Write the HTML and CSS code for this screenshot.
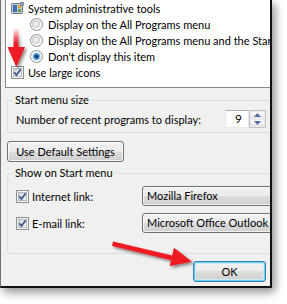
FILE: index.html
```html
<!DOCTYPE html>
<html>
<head>
<meta charset="utf-8">
<link rel="stylesheet" href="styles.css">
</head>
<body>
<div class="dialog">
  <div class="inner">
    <div class="list">
      <div class="row lvl0">
        <svg class="ico" width="13" height="12" viewBox="0 0 13 12">
          <rect x="0.5" y="1.5" width="11" height="10" rx="1" fill="#c9ced6" stroke="#6d7787"/>
          <rect x="2" y="3" width="4" height="7" fill="#3d6fb6"/>
          <rect x="7" y="3" width="3" height="3" fill="#e0a526"/>
          <rect x="7" y="7" width="3" height="3" fill="#5aa34a"/>
          <rect x="9" y="0" width="4" height="4" fill="#8b96a8"/>
        </svg>
        <span>System administrative tools</span>
      </div>
      <div class="row lvl1"><span class="radio"></span><span>Display on the All Programs menu</span></div>
      <div class="row lvl1"><span class="radio"></span><span>Display on the All Programs menu and the Start menu</span></div>
      <div class="row lvl1"><span class="radio on"></span><span>Don't display this item</span></div>
      <div class="row lvl0"><span class="check"><svg class="tick" viewBox="0 0 13 13"><path d="M3.2 6.3 L5.4 9 L9.8 3.2" fill="none" stroke="#3f5a94" stroke-width="1.8"/></svg></span><span>Use large icons</span></div>
    </div>

    <fieldset class="group g1">
      <legend>Start menu size</legend>
      <div class="sizerow">
        <span>Number of recent programs to display:</span>
        <div class="spin">
          <div class="spinval">9</div>
          <div class="spinbtns">
            <span class="sb"><svg width="7" height="4" viewBox="0 0 7 4"><path d="M0 4 L3.5 0 L7 4Z" fill="#4f6fa8"/></svg></span>
            <span class="sb"><svg width="7" height="4" viewBox="0 0 7 4"><path d="M0 0 L3.5 4 L7 0Z" fill="#4f6fa8"/></svg></span>
          </div>
        </div>
      </div>
    </fieldset>

    <div class="btnrow"><button class="btn">Use Default Settings</button></div>

    <fieldset class="group g2">
      <legend>Show on Start menu</legend>
      <div class="links">
        <div class="lnk"><span class="check"><svg class="tick" viewBox="0 0 13 13"><path d="M3.2 6.3 L5.4 9 L9.8 3.2" fill="none" stroke="#3f5a94" stroke-width="1.8"/></svg></span><span>Internet link:</span></div>
        <div class="combo">Mozilla Firefox</div>
        <div class="lnk"><span class="check"><svg class="tick" viewBox="0 0 13 13"><path d="M3.2 6.3 L5.4 9 L9.8 3.2" fill="none" stroke="#3f5a94" stroke-width="1.8"/></svg></span><span>E-mail link:</span></div>
        <div class="combo">Microsoft Office Outlook</div>
      </div>
    </fieldset>

    <div class="actions"><button class="btn ok">OK</button></div>
  </div>
</div>

<svg class="arrows" width="287" height="304" viewBox="0 0 287 304">
  <defs>
    <linearGradient id="fade" x1="0" y1="28" x2="0" y2="44" gradientUnits="userSpaceOnUse">
      <stop offset="0" stop-color="#ee1c24" stop-opacity="0"/>
      <stop offset="1" stop-color="#ee1c24" stop-opacity="1"/>
    </linearGradient>
    <filter id="sh" x="-50%" y="-50%" width="200%" height="200%">
      <feDropShadow dx="2" dy="2" stdDeviation="1.6" flood-color="#000" flood-opacity="0.45"/>
    </filter>
  </defs>
  <g filter="url(#sh)">
    <rect x="13.5" y="28" width="5" height="21" fill="url(#fade)"/>
    <path d="M7.5 47 L25 47 L16.3 67 Z" fill="#ee1c24"/>
  </g>
  <g filter="url(#sh)">
    <path d="M113 241.4 L172.3 255.4 L171.2 260.2 L112 246 Z" fill="#ee1c24"/>
    <path d="M174 247.8 L192 261.8 L169.6 266 Z" fill="#ee1c24"/>
  </g>
</svg>
</body>
</html>
```

FILE: styles.css
```css
html, body {
  margin: 0;
  padding: 0;
}
body {
  width: 287px;
  height: 304px;
  background: #fff;
  position: relative;
  overflow: hidden;
  font-family: "Lato", "Noto Sans", sans-serif;
  font-size: 11px;
  color: #000;
}
.dialog {
  width: 272px;
  height: 288px;
  box-sizing: border-box;
  border-left: 1px solid #707070;
  border-right: 2px solid #111;
  border-bottom: 2px solid #111;
  background: #f0f0f0;
  box-shadow: 3px 4px 9px rgba(0, 0, 0, 0.45);
  overflow: hidden;
}
.inner {
  width: 290px;
}
.list {
  margin-left: 4px;
  height: 88px;
  box-sizing: border-box;
  background: #fff;
  border-left: 1px solid #828790;
  border-bottom: 1px solid #828790;
}
.row {
  height: 16px;
  display: flex;
  align-items: center;
  white-space: nowrap;
}
.lvl0 {
  padding-left: 5px;
  gap: 4px;
}
.lvl1 {
  padding-left: 24px;
  gap: 5px;
}
.ico {
  flex: none;
}
.radio {
  flex: none;
  width: 13px;
  height: 13px;
  box-sizing: border-box;
  border-radius: 50%;
  border: 1px solid #8e8f8f;
  background: radial-gradient(circle at 45% 45%, #f6f6f6 0, #e2e2e2 2.5px, #cdcdcd 4px, #fff 4.6px);
}
.radio.on {
  background: radial-gradient(circle at 50% 50%, #14305c 0, #25579a 1.8px, #6fb3e6 3px, #bfe0f6 4px, #fff 4.6px);
}
.check {
  flex: none;
  width: 13px;
  height: 13px;
  box-sizing: border-box;
  border: 1px solid #8e8f8f;
  background: #f7f7f7;
  position: relative;
}
.check::before {
  content: "";
  position: absolute;
  left: 1px;
  top: 1px;
  right: 1px;
  bottom: 1px;
  border: 1px solid #b5b9c0;
  background: linear-gradient(135deg, #d2d5da, #f5f5f5);
}
.tick {
  position: absolute;
  left: -1px;
  top: -1px;
  width: 13px;
  height: 13px;
}
.group {
  margin: 0 0 0 6px;
  border: 1px solid #d5dfe5;
  border-radius: 3px;
  padding: 0 0 0 5px;
  min-width: 0;
}
.group legend {
  padding: 0 2px;
  line-height: 16px;
  height: 16px;
}
.g1 {
  margin-top: 4px;
  padding-top: 2px;
  padding-bottom: 4px;
}
.sizerow {
  display: grid;
  grid-template-columns: 209px auto;
  align-items: center;
  padding-left: 3px;
  white-space: nowrap;
}
.spin {
  display: flex;
  height: 18px;
  justify-self: start;
}
.spinval {
  width: 24px;
  box-sizing: border-box;
  height: 18px;
  background: #fff;
  border: 1px solid #e3e9ef;
  border-top-color: #abadb3;
  text-align: right;
  padding-right: 6px;
  line-height: 16px;
  font-size: 12px;
}
.spinbtns {
  display: flex;
  flex-direction: column;
  width: 17px;
  border: 1px solid #c3c3c3;
  box-sizing: border-box;
}
.sb {
  flex: 1;
  display: flex;
  align-items: center;
  justify-content: center;
  background: linear-gradient(#fbfbfb, #e6e6e6);
  border: 1px solid #e9e9e9;
}
.btnrow {
  margin: 8px 0 0 6px;
}
.btn {
  font: inherit;
  color: #000;
  height: 21px;
  box-sizing: border-box;
  border: 1px solid #707070;
  border-radius: 3px;
  background: linear-gradient(#f2f2f2 0, #ebebeb 50%, #dddddd 50%, #cfcfcf 100%);
  box-shadow: inset 0 0 0 1px rgba(255, 255, 255, 0.75);
  padding: 0;
  display: block;
}
.btnrow .btn {
  width: 117px;
}
.g2 {
  margin-top: 3px;
  padding-top: 5px;
  padding-bottom: 20px;
  padding-left: 8px;
}
.g2 legend {
  margin-left: -3px;
}
.links {
  display: grid;
  grid-template-columns: 126px 140px;
  row-gap: 7px;
  align-items: center;
}
.lnk {
  display: flex;
  align-items: center;
  gap: 3px;
  white-space: nowrap;
}
.combo {
  height: 20px;
  box-sizing: border-box;
  border: 1px solid #707070;
  border-radius: 3px;
  background: linear-gradient(#f2f2f2 0, #ebebeb 50%, #dddddd 50%, #cfcfcf 100%);
  box-shadow: inset 0 0 0 1px rgba(255, 255, 255, 0.7);
  padding-left: 4px;
  line-height: 18px;
  white-space: nowrap;
}
.actions {
  margin: 7px 0 0 192px;
}
.btn.ok {
  width: 73px;
  border-color: #3c7fb1;
  box-shadow: inset 0 0 0 1px #5fd0f6, inset 0 0 0 2px #c8eefc;
}
.arrows {
  position: absolute;
  left: 0;
  top: 0;
  pointer-events: none;
}
```
